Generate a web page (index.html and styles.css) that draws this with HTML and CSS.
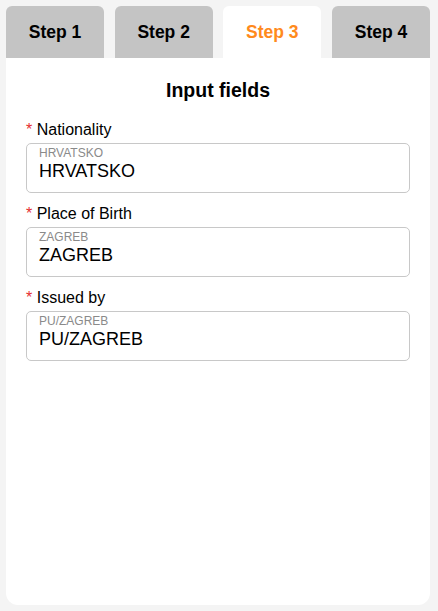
FILE: index.html
```html
<!DOCTYPE html>
<html>
<head>
<meta charset="utf-8">
<link rel="stylesheet" href="styles.css">
</head>
<body>
<div class="wrap">
  <div class="tabs">
    <div class="tab">Step 1</div>
    <div class="tab">Step 2</div>
    <div class="tab active">Step 3</div>
    <div class="tab">Step 4</div>
  </div>
  <div class="panel">
    <h1 class="title">Input fields</h1>
    <div class="field">
      <div class="label"><span class="req">*</span> Nationality</div>
      <div class="box">
        <div class="hint">HRVATSKO</div>
        <div class="value">HRVATSKO</div>
      </div>
    </div>
    <div class="field">
      <div class="label"><span class="req">*</span> Place of Birth</div>
      <div class="box">
        <div class="hint">ZAGREB</div>
        <div class="value">ZAGREB</div>
      </div>
    </div>
    <div class="field last">
      <div class="label"><span class="req">*</span> Issued by</div>
      <div class="box">
        <div class="hint">PU/ZAGREB</div>
        <div class="value">PU/ZAGREB</div>
      </div>
    </div>
  </div>
</div>
</body>
</html>
```
FILE: styles.css
```css
html, body {
  margin: 0;
  padding: 0;
  background: #f4f4f4;
  font-family: "Liberation Sans", Arial, sans-serif;
}
.wrap {
  padding: 6px 8px 6px 6px;
  height: 611px;
  box-sizing: border-box;
  display: flex;
  flex-direction: column;
}
.tabs {
  display: flex;
  justify-content: space-between;
  height: 52px;
}
.tab {
  width: 98px;
  background: #c4c4c4;
  border-radius: 6px 6px 0 0;
  display: flex;
  align-items: center;
  justify-content: center;
  font-weight: bold;
  font-size: 17.5px;
  color: #000;
}
.tab.active {
  background: #fff;
  color: #ff8a1c;
}
.panel {
  flex: 1;
  background: #fff;
  border-radius: 0 0 12px 12px;
  padding: 20px 20px 0 20px;
}
.title {
  margin: 0 0 18px 0;
  text-align: center;
  font-size: 19.5px;
  font-weight: bold;
  line-height: 24px;
}
.field {
  margin-bottom: 11px;
}
.field.last {
  margin-top: 1px;
}
.label {
  font-size: 16px;
  line-height: 20px;
  color: #000;
  margin-bottom: 3px;
}
.req {
  color: #e53030;
}
.box {
  border: 1px solid #c8c8c8;
  border-radius: 5px;
  height: 48px;
  box-sizing: content-box;
  padding: 0 12px;
}
.hint {
  font-size: 12px;
  line-height: 14px;
  color: #8a8a8a;
  margin-top: 2px;
}
.value {
  font-size: 18px;
  line-height: 22px;
  color: #000;
}
```
